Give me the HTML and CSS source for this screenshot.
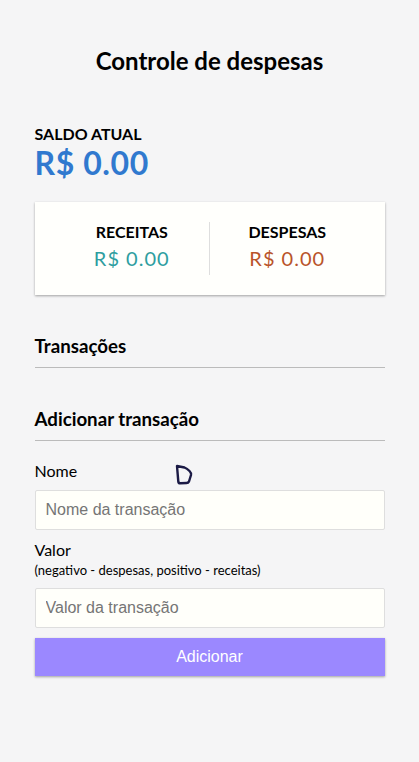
FILE: index.html
```html
<!DOCTYPE html>
<html lang="pt-BR">
<head>
<meta charset="utf-8">
<title>Controle de despesas</title>
<link rel="stylesheet" href="styles.css">
</head>
<body>
<h2 class="title">Controle de despesas</h2>
<div class="container">
  <h4>Saldo atual</h4>
  <h1 class="balance">R$ 0.00</h1>
  <div class="inc-exp-container">
    <div class="col">
      <h4>Receitas</h4>
      <p class="money plus">R$ 0.00</p>
    </div>
    <div class="col">
      <h4>Despesas</h4>
      <p class="money minus">R$ 0.00</p>
    </div>
  </div>
  <h3>Transações</h3>
  <ul class="list"></ul>
  <h3>Adicionar transação</h3>
  <form class="form">
    <div class="form-control">
      <label for="text">Nome</label>
      <input type="text" id="text" placeholder="Nome da transação">
    </div>
    <div class="form-control">
      <label for="amount">Valor <br><small>(negativo - despesas, positivo - receitas)</small></label>
      <input type="number" id="amount" placeholder="Valor da transação">
    </div>
    <button type="button" class="btn">Adicionar</button>
  </form>
</div>
<svg class="cursor" width="22" height="26" viewBox="0 0 22 26"><path d="M4 5 L11.5 6.5 Q14 7.5 16.5 10 Q18.5 12 18 14 L16 20.5 Q15.3 22 13.5 22 L7.5 22.3 Q5.5 22.4 5.3 20.5 Z" fill="none" stroke="#1b1a45" stroke-width="2.4" stroke-linejoin="round"/></svg>
</body>
</html>
```
FILE: styles.css
```css
* { box-sizing: border-box; }
body {
  background-color: #f5f5f6;
  display: flex;
  flex-direction: column;
  align-items: center;
  margin: 0;
  padding-top: 26px;
  font-family: Lato, "Liberation Sans", sans-serif;
  position: relative;
  min-height: 100vh;
}
.title { font-size: 24px; margin: 20px 0 0; color: #000; }
.container { margin: 49px auto 30px; width: 350px; }
h1 { margin: 0; font-size: 32px; letter-spacing: 0.6px; }
.balance { color: #3079cf; }
h4 { margin: 0; text-transform: uppercase; font-size: 16px; }
h3 {
  border-bottom: 1px solid #bbb;
  padding-bottom: 10px;
  margin: 40px 0 10px;
  font-size: 18.7px;
}
.inc-exp-container {
  background-color: #fffffc;
  box-shadow: 0 1px 3px rgba(0,0,0,0.12), 0 1px 2px rgba(0,0,0,0.24);
  padding: 20px;
  display: flex;
  justify-content: space-between;
  margin: 20px 0;
}
.col { flex: 1; text-align: center; }
.col:first-of-type { border-right: 1px solid #dedede; }
.money { font-size: 20px; letter-spacing: 1px; margin: 5px 0; }
.plus { color: #2e9ea0; }
.minus { color: #b9542a; }
.list { list-style: none; padding: 0; margin: 0 0 10px; }
label { display: inline-block; margin: 10px 0; font-size: 16px; }
small { font-size: 13px; }
input {
  border: 1px solid #dedede;
  border-radius: 2px;
  display: block;
  font-size: 16px;
  padding: 10px;
  width: 100%;
  background: #fffffa;
  font-family: "Liberation Sans", Arial, sans-serif;
  color: #333;
}
input::placeholder { color: #757575; }
.btn {
  background-color: #9b88ff;
  box-shadow: 0 1px 3px rgba(0,0,0,0.12), 0 1px 2px rgba(0,0,0,0.24);
  color: #fff;
  border: 0;
  display: block;
  font-size: 16px;
  font-family: "Liberation Sans", Arial, sans-serif;
  margin: 10px 0 30px;
  padding: 10px;
  width: 100%;
}
.cursor { position: absolute; left: 173px; top: 461px; }
```
